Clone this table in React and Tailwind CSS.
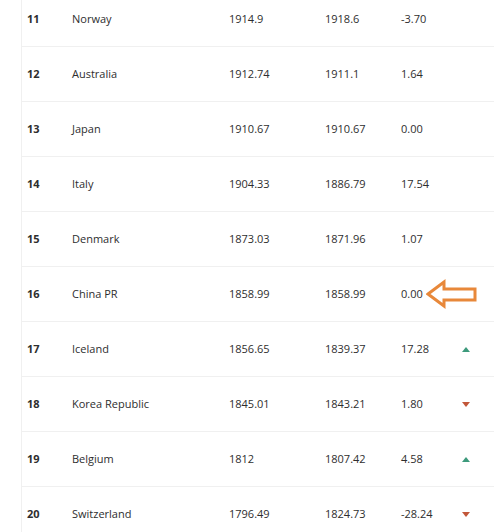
import React from "react";

const ROWS = [
  { rank: 11, name: "Norway", total: "1914.9", prev: "1918.6", diff: "-3.70" },
  { rank: 12, name: "Australia", total: "1912.74", prev: "1911.1", diff: "1.64" },
  { rank: 13, name: "Japan", total: "1910.67", prev: "1910.67", diff: "0.00" },
  { rank: 14, name: "Italy", total: "1904.33", prev: "1886.79", diff: "17.54" },
  { rank: 15, name: "Denmark", total: "1873.03", prev: "1871.96", diff: "1.07" },
  { rank: 16, name: "China PR", total: "1858.99", prev: "1858.99", diff: "0.00", arrow: true },
  { rank: 17, name: "Iceland", total: "1856.65", prev: "1839.37", diff: "17.28", move: "up" },
  { rank: 18, name: "Korea Republic", total: "1845.01", prev: "1843.21", diff: "1.80", move: "down" },
  { rank: 19, name: "Belgium", total: "1812", prev: "1807.42", diff: "4.58", move: "up" },
  { rank: 20, name: "Switzerland", total: "1796.49", prev: "1824.73", diff: "-28.24", move: "down" },
];

function Move({ dir }) {
  if (dir === "up") {
    return (
      <svg width="8" height="5" viewBox="0 0 8 5">
        <path d="M0 5 L4 0 L8 5 Z" fill="#3d9a7c" />
      </svg>
    );
  }
  return (
    <svg width="8" height="5" viewBox="0 0 8 5">
      <path d="M0 0 L8 0 L4 5 Z" fill="#c2573a" />
    </svg>
  );
}

function Arrow() {
  return (
    <svg width="54" height="30" viewBox="0 0 54 30" className="shrink-0">
      <path
        d="M2 15 L18 3 L18 10 L49 10 L49 21 L18 21 L18 27 Z"
        fill="#fff"
        stroke="#e8883a"
        strokeWidth="3"
        strokeLinejoin="miter"
      />
    </svg>
  );
}

export default function App() {
  return (
    <div className="w-[494px] h-[532px] overflow-hidden bg-white text-[11px] text-[#2e2e2e]" style={{ fontFamily: "'Open Sans', 'Liberation Sans', sans-serif" }}>
      <div className="ml-[21px] border-l border-[#f0f0f0] -mt-[8px]">
        {ROWS.map((r) => (
          <div key={r.rank} className="h-[55px] flex items-center border-b border-[#f0f0f0]">
            <div className="w-[50px] pl-[5px] font-bold">{r.rank}</div>
            <div className="w-[157px]">{r.name}</div>
            <div className="w-[96px]">{r.total}</div>
            <div className="w-[76px]">{r.prev}</div>
            <div className="flex items-center">
              <span className="w-[26px]">{r.diff}</span>
              {r.arrow && <div className="-ml-[1px]"><Arrow /></div>}
              {r.move && (
                <div className="ml-[35px] flex items-center">
                  <Move dir={r.move} />
                </div>
              )}
            </div>
          </div>
        ))}
      </div>
    </div>
  );
}
